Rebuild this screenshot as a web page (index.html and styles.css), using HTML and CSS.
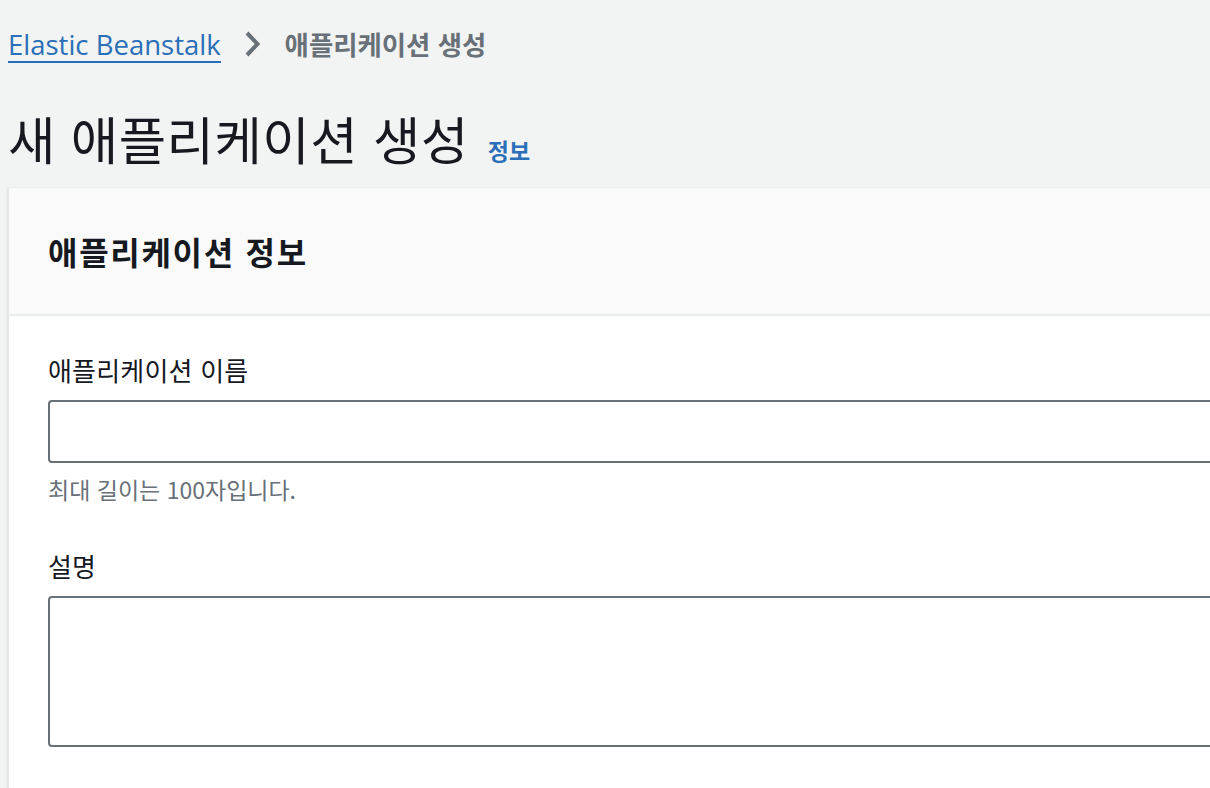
FILE: index.html
```html
<!DOCTYPE html>
<html lang="ko">
<head>
<meta charset="utf-8">
<title>새 애플리케이션 생성</title>
<link rel="stylesheet" href="styles.css">
</head>
<body>
<div class="page">
  <nav class="breadcrumbs">
    <a class="crumb-link" href="#">Elastic Beanstalk</a>
    <svg class="chevron" width="20" height="26" viewBox="0 0 20 26"><path d="M5 2 L15.5 13 L5 24" fill="none" stroke="#687078" stroke-width="4" stroke-linecap="butt" stroke-linejoin="miter"/></svg>
    <span class="crumb-current">애플리케이션 생성</span>
  </nav>
  <div class="title-row">
    <h1 class="title">새 애플리케이션 생성</h1>
    <a class="info" href="#">정보</a>
  </div>
  <section class="card">
    <header class="card-header">
      <h2 class="card-title">애플리케이션 정보</h2>
    </header>
    <div class="card-body">
      <div class="field">
        <label class="label">애플리케이션 이름</label>
        <div class="input"></div>
        <div class="hint">최대 길이는 100자입니다.</div>
      </div>
      <div class="field">
        <label class="label">설명</label>
        <div class="textarea"></div>
      </div>
    </div>
  </section>
</div>
</body>
</html>
```
FILE: styles.css
```css
html, body {
  margin: 0;
  padding: 0;
  background: #f2f3f3;
  overflow: hidden;
  height: 100%;
}
body {
  font-family: "Noto Sans CJK KR", "Open Sans", sans-serif;
  color: #16191f;
}
.page {
  padding-left: 8px;
  width: 1400px;
}
.breadcrumbs {
  display: flex;
  align-items: center;
  padding-top: 20px;
  box-sizing: border-box;
  height: 68px;
}
.crumb-link {
  font-family: "Open Sans", "Noto Sans CJK KR", sans-serif;
  font-size: 27.5px;
  color: #2a6fb7;
  text-decoration: none;
  border-bottom: 2px solid #2a6fb7;
  line-height: 32px;
  margin-top: 4px;
}
.chevron {
  margin-left: 21px;
  margin-right: 23px;
}
.crumb-current {
  font-size: 26.4px;
  font-weight: 700;
  color: #687078;
  line-height: 34px;
}
.title-row {
  display: flex;
  align-items: baseline;
  box-sizing: border-box;
  height: 119px;
  padding-top: 40px;
}
.title {
  margin: 0;
  font-size: 51.5px;
  font-weight: 400;
  line-height: 60px;
  letter-spacing: 0.5px;
}
.info {
  font-size: 23px;
  font-weight: 700;
  color: #2a6fb7;
  text-decoration: none;
  margin-left: 19px;
}
.card {
  margin-left: -1px;
  background: #ffffff;
  border-left: 2px solid #e4e7e7;
  border-top: 1px solid #eaeded;
  box-shadow: 0 1px 1px rgba(0,28,36,0.15);
  height: 700px;
}
.card-header {
  background: #fafafa;
  height: 126px;
  border-bottom: 2px solid #eaeded;
  display: flex;
  align-items: center;
  padding-left: 39px;
}
.card-title {
  margin: 0;
  font-size: 32px;
  font-weight: 700;
  letter-spacing: 1.7px;
  line-height: 40px;
}
.card-body {
  padding: 38px 0 0 39px;
  display: flex;
  flex-direction: column;
  gap: 47px;
}
.field {
  display: flex;
  flex-direction: column;
}
.label {
  font-size: 26px;
  line-height: 32px;
  letter-spacing: 0.2px;
  margin-bottom: 14px;
}
.input {
  height: 59px;
  border: 2px solid #687078;
  border-radius: 4px;
  background: #fff;
}
.hint {
  font-size: 23px;
  color: #687078;
  line-height: 28px;
  margin-top: 12px;
}
.textarea {
  height: 147px;
  border: 2px solid #687078;
  border-radius: 4px;
  background: #fff;
}
```
